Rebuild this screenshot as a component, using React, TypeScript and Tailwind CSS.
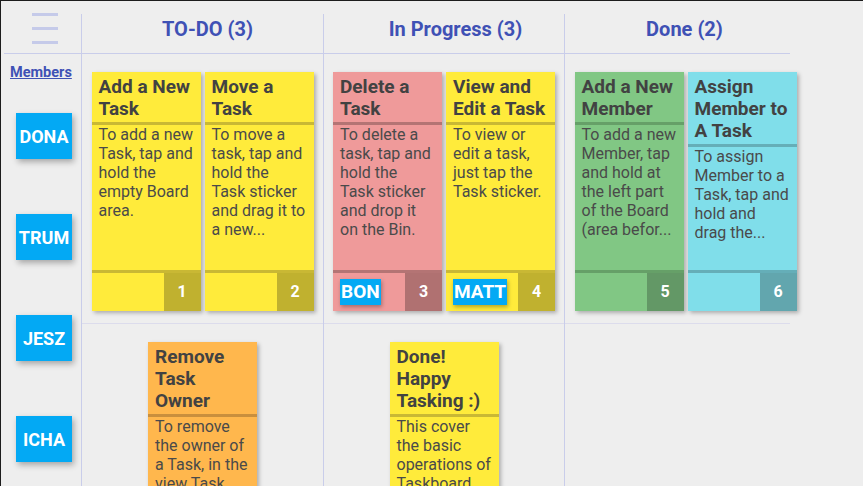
import React from "react";

type Tone = "yellow" | "pink" | "green" | "cyan" | "orange";

// card colours: face, separator band, number box
const TONES: Record<Tone, { face: string; band: string; box: string }> = {
  yellow: { face: "bg-[#ffeb3b]", band: "border-[#c9b834]", box: "bg-[#c0b12f]" },
  pink: { face: "bg-[#ef9a9a]", band: "border-[#b47474]", box: "bg-[#b07171]" },
  green: { face: "bg-[#81c784]", band: "border-[#66a068]", box: "bg-[#639866]" },
  cyan: { face: "bg-[#80deea]", band: "border-[#65aeb8]", box: "bg-[#62a6ae]" },
  orange: { face: "bg-[#ffb74d]", band: "border-[#c98f3d]", box: "bg-[#c48c3b]" },
};

type Task = {
  title: string;
  body: string[]; // lines as the sticker shows them (already clamped)
  tone: Tone;
  num?: number;
  owner?: string;
};

const ROW1: Task[][] = [
  [
    { title: "Add a New Task", body: ["To add a new", "Task, tap and", "hold the", "empty Board", "area."], tone: "yellow", num: 1 },
    { title: "Move a Task", body: ["To move a", "task, tap and", "hold the", "Task sticker", "and drag it to", "a new..."], tone: "yellow", num: 2 },
  ],
  [
    { title: "Delete a Task", body: ["To delete a", "task, tap and", "hold the", "Task sticker", "and drop it", "on the Bin."], tone: "pink", num: 3, owner: "BON" },
    { title: "View and Edit a Task", body: ["To view or", "edit a task,", "just tap the", "Task sticker."], tone: "yellow", num: 4, owner: "MATT" },
  ],
  [
    { title: "Add a New Member", body: ["To add a new", "Member, tap", "and hold at", "the left part", "of the Board", "(area befor..."], tone: "green", num: 5 },
    { title: "Assign Member to A Task", body: ["To assign", "Member to a", "Task, tap and", "hold and", "drag the..."], tone: "cyan", num: 6 },
  ],
];

const ROW2: Task[][] = [
  [{ title: "Remove Task Owner", body: ["To remove", "the owner of", "a Task, in the", "view Task..."], tone: "orange" }],
  [{ title: "Done! Happy Tasking :)", body: ["This cover", "the basic", "operations of", "Taskboard..."], tone: "yellow" }],
  [],
];

const HEADERS = [
  { label: "TO-DO (3)", cls: "w-[242px] pl-[10px]" },
  { label: "In Progress (3)", cls: "w-[241px] pl-[23px]" },
  { label: "Done (2)", cls: "w-[226px] pl-[14px]" },
];

const MEMBERS = ["DONA", "TRUM", "JESZ", "ICHA"];

function Card({ task }: { task: Task }) {
  const t = TONES[task.tone];
  return (
    <div className={`w-[109px] h-[239px] flex flex-col shrink-0 ${t.face} shadow-[2px_2px_4px_rgba(0,0,0,0.28)]`}>
      <div className={`px-[7px] pt-[4px] pb-[2px] border-b-[3px] ${t.band} text-[19px] leading-[22px] font-bold text-[#424242]`}>
        {task.title}
      </div>
      <div className="flex-1 pl-[7px] overflow-hidden text-[16px] leading-[19px] text-[#4a4a4a]">
        {task.body.map((line, i) => (
          <span key={i} className="block whitespace-nowrap">
            {line}
          </span>
        ))}
      </div>
      <div className={`h-[41px] shrink-0 flex border-t-[3px] ${t.band}`}>
        <div className="flex-1 flex items-center pl-[7px]">
          {task.owner && (
            <span className="h-[26px] px-[1px] bg-[#03a9f4] text-white text-[19px] leading-[26px] font-bold shadow-[1px_2px_4px_rgba(0,0,0,0.3)]">
              {task.owner}
            </span>
          )}
        </div>
        {task.num !== undefined && (
          <div className={`w-[37px] flex items-center justify-center ${t.box} text-white text-[16px] font-bold`}>
            {task.num}
          </div>
        )}
      </div>
    </div>
  );
}

export default function App() {
  return (
    <div
      className="w-[863px] h-[486px] overflow-hidden flex flex-col bg-[#eeeeee] border-t border-l border-[#1c1c1c]"
      style={{ fontFamily: "Roboto, 'Noto Sans', sans-serif" }}
    >
      {/* header */}
      <div className="h-[53px] shrink-0 ml-[3px] w-[786px] flex border-b border-[#c9cdea]">
        <div className="w-[77px] shrink-0 pl-[28px] pt-[12px] flex flex-col gap-[11px]">
          <span className="block w-[26px] h-[3px] bg-[#c5cae9]" />
          <span className="block w-[26px] h-[3px] bg-[#c5cae9]" />
          <span className="block w-[26px] h-[3px] bg-[#c5cae9]" />
        </div>
        {HEADERS.map((h) => (
          <div
            key={h.label}
            className={`${h.cls} shrink-0 mt-[13px] border-l border-[#c9cdea] flex justify-center pt-[4px]`}
          >
            <span className="text-[20px] leading-[22px] font-bold text-[#3f51b5]">{h.label}</span>
          </div>
        ))}
      </div>

      {/* board */}
      <div className="flex flex-1">
        {/* members */}
        <div className="w-[80px] shrink-0 flex flex-col pt-[10px]">
          <a className="ml-[9px] text-[14.5px] leading-[18px] font-bold text-[#3f51b5] underline">Members</a>
          <div className="mt-[31px] pl-[15px] flex flex-col gap-[55px]">
            {MEMBERS.map((m) => (
              <div
                key={m}
                className="w-[56px] h-[46px] flex items-center justify-center bg-[#03a9f4] text-white text-[18px] font-bold shadow-[2px_3px_6px_rgba(0,0,0,0.3)]"
              >
                {m}
              </div>
            ))}
          </div>
        </div>

        {[0, 1, 2].map((c) => (
          <div
            key={c}
            className={`${c === 1 ? "w-[241px]" : "w-[242px]"} shrink-0 flex flex-col border-l border-[#c9cdea]`}
          >
            <div className="h-[269px] shrink-0 flex justify-center gap-[4px] pt-[18px]">
              {ROW1[c].map((t) => (
                <Card key={t.title} task={t} />
              ))}
            </div>
            <div className={`h-px shrink-0 bg-[#dcdcec] ${c === 2 ? "w-[225px]" : "w-full"}`} />
            <div className="flex justify-center gap-[4px] pt-[18px]">
              {ROW2[c].map((t) => (
                <Card key={t.title} task={t} />
              ))}
            </div>
          </div>
        ))}
      </div>
    </div>
  );
}
